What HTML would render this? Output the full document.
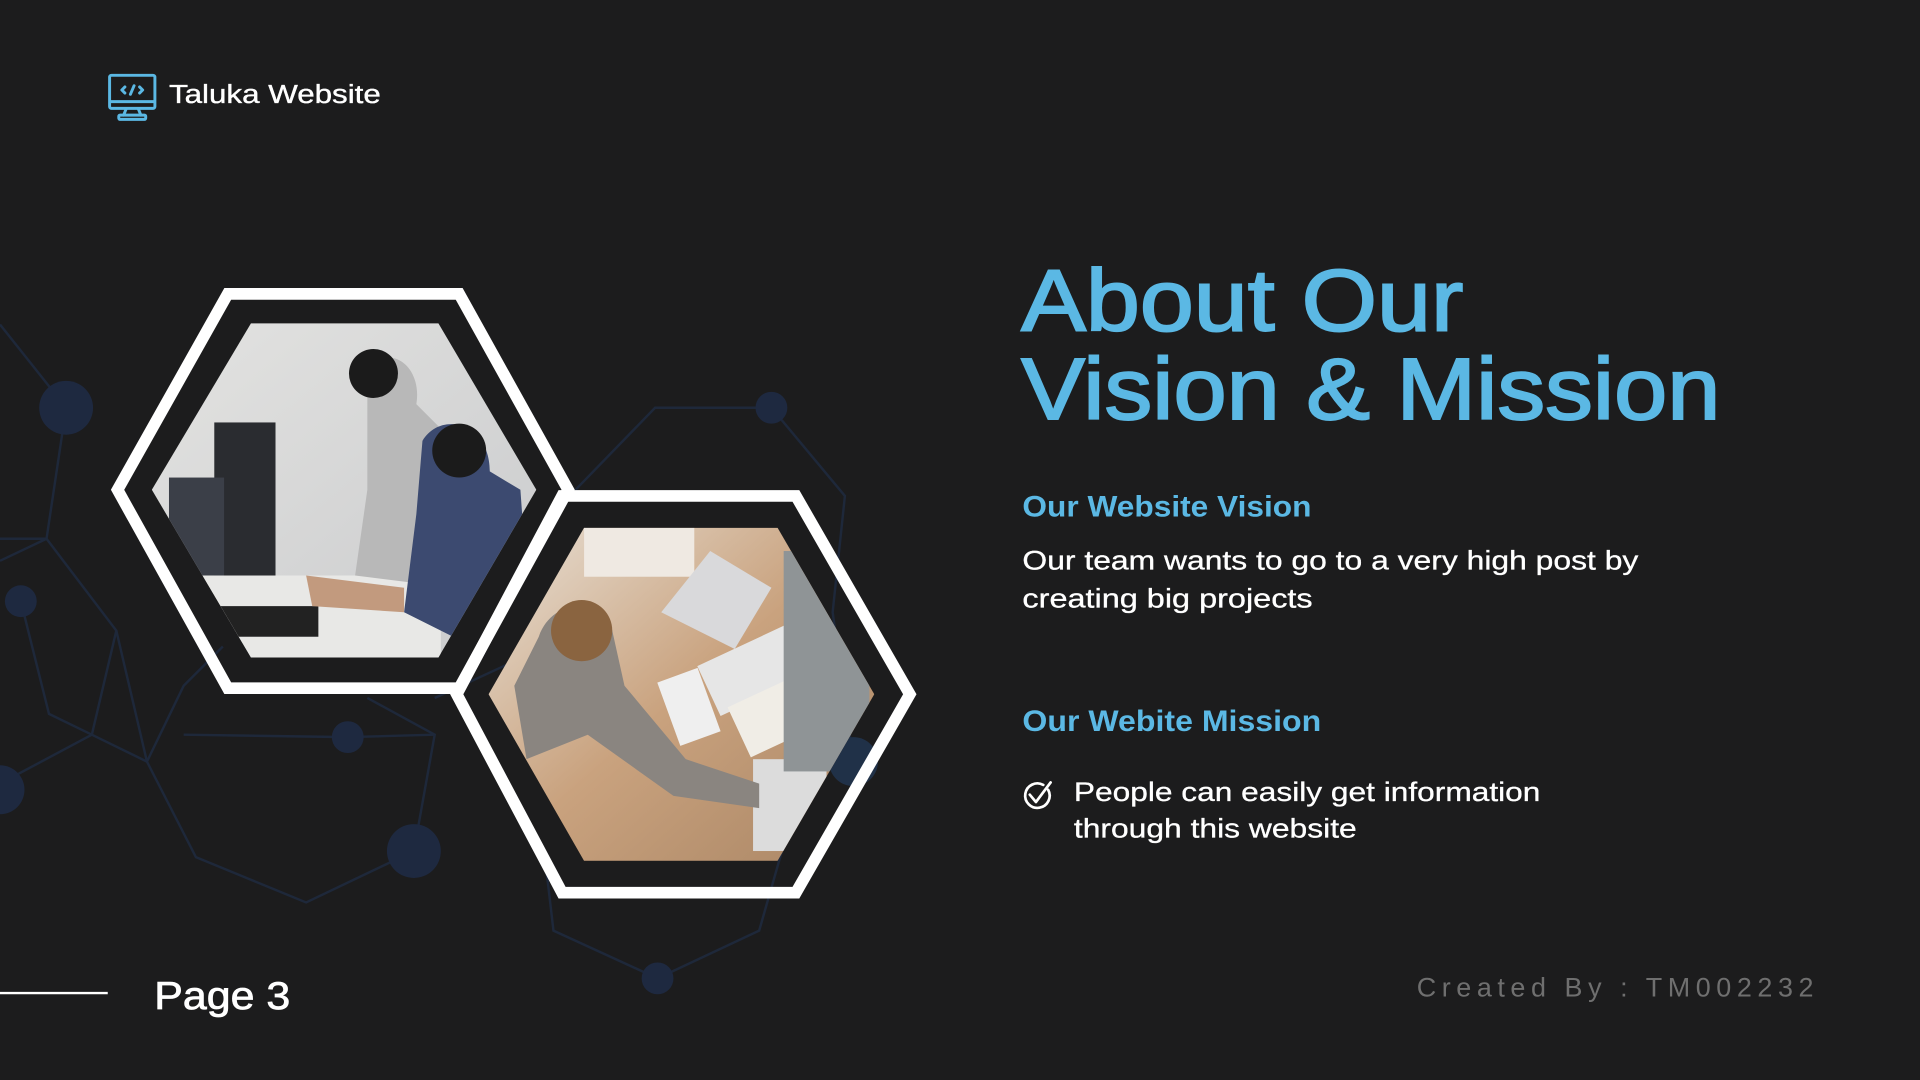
<!DOCTYPE html>
<html><head><meta charset="utf-8"><style>
html,body{margin:0;padding:0;background:#1c1c1d;width:1920px;height:1080px;overflow:hidden}
svg{display:block}
text{font-family:"Liberation Sans",sans-serif}
</style></head><body>
<svg width="1920" height="1080" viewBox="0 0 1568 882" xmlns="http://www.w3.org/2000/svg">
<defs>
<clipPath id="c1"><polygon points="205,264 358,264 438,400 358,537 205,537 124,400"/></clipPath>
<clipPath id="c2"><polygon points="477,431 635,431 714,567 635,703 477,703 399,567"/></clipPath>
<linearGradient id="g1" x1="0" y1="0" x2="1" y2="1"><stop offset="0" stop-color="#e4e4e2"/><stop offset="1" stop-color="#c8c9cb"/></linearGradient>
<linearGradient id="g2" x1="0" y1="0" x2="1" y2="1"><stop offset="0" stop-color="#e9e2d8"/><stop offset="0.5" stop-color="#c9a27e"/><stop offset="1" stop-color="#a88463"/></linearGradient>
</defs>
<rect width="1568" height="882" fill="#1c1c1d"/>
<g stroke="#1e283a" stroke-width="2" fill="none">
<polyline points="0,265 54,333 38,440 0,458"/>
<polyline points="0,440 38,440 95,515 75,600 0,640"/>
<polyline points="17,491 40,583 75,600 120,622 150,560 182,528"/>
<polyline points="95,515 120,622 160,700 250,737 338,695 355,600 300,570"/>
<polyline points="150,600 284,602 355,600"/>
<polyline points="470,400 535,333 630,333 690,405 680,500 697,622"/>
<polyline points="445,700 452,760 537,799 620,760 640,690"/>
<polyline points="355,570 420,540 470,560"/>
</g>
<g fill="#1e2940">
<circle cx="54" cy="333" r="22"/><circle cx="630" cy="333" r="13"/><circle cx="17" cy="491" r="13"/>
<circle cx="284" cy="602" r="13"/><circle cx="338" cy="695" r="22"/><circle cx="537" cy="799" r="13"/>
<circle cx="0" cy="645" r="20"/><circle cx="697" cy="622" r="20" fill="#203148"/>
</g>
<g clip-path="url(#c1)">
<rect x="100" y="260" width="350" height="290" fill="url(#g1)"/>
<rect x="175" y="345" width="50" height="130" fill="#2a2c30"/>
<rect x="138" y="390" width="45" height="80" fill="#3b3f48"/>
<rect x="160" y="470" width="200" height="70" fill="#e8e8e6"/>
<rect x="180" y="495" width="80" height="25" fill="#222"/>
<path d="M300,300 C320,280 345,300 340,330 L370,360 370,480 290,470 300,400 Z" fill="#b8b8b8"/>
<path d="M345,360 C360,335 400,345 400,385 L425,400 430,470 370,520 330,500 340,420 Z" fill="#3c4a70"/>
<circle cx="305" cy="305" r="20" fill="#1b1b1b"/><circle cx="375" cy="368" r="22" fill="#1b1b1b"/>
<path d="M250,470 L330,480 330,500 255,495Z" fill="#c29a7e"/>
</g>
<g clip-path="url(#c2)">
<rect x="395" y="425" width="325" height="285" fill="url(#g2)"/>
<rect x="477" y="431" width="90" height="40" fill="#efe9e2"/>
<path d="M540,500 L580,450 630,480 600,530Z" fill="#d9d9db"/>
<rect x="575" y="525" width="80" height="45" fill="#e6e6e6" transform="rotate(-25 615 547)"/>
<rect x="600" y="560" width="75" height="45" fill="#f0ede6" transform="rotate(-25 637 582)"/>
<rect x="545" y="550" width="35" height="55" fill="#efefef" transform="rotate(-20 562 577)"/>
<rect x="615" y="620" width="60" height="75" fill="#dcdcdc"/>
<path d="M440,520 C450,490 490,485 500,515 L510,560 560,620 620,640 620,660 550,650 480,600 430,620 420,560Z" fill="#8a8580"/>
<circle cx="475" cy="515" r="25" fill="#8a6440"/>
<rect x="640" y="450" width="70" height="180" fill="#8f9496"/>
</g>
<g fill="none" stroke="#fff" stroke-width="9.5" stroke-linejoin="miter">
<polygon points="186,240 375,240 464,400 375,562 186,562 96,400"/>
<polygon points="459,405 650,405 743,567 650,729 459,729 373,567"/>
</g>
<g fill="none" stroke="#5bb8e4" stroke-width="2.4" stroke-linecap="round" stroke-linejoin="round">
<rect x="89.5" y="61.5" width="37" height="27" rx="1.5"/>
<line x1="90" y1="83" x2="126" y2="83"/>
<path d="M103,89 L101,94 M113,89 L115,94"/>
<rect x="97" y="94" width="22" height="3.5" rx="1"/>
<path d="M102,71 L99.5,73.5 L102,76 M114,71 L116.5,73.5 L114,76 M109.5,70 L106.5,77"/>
</g>
<text x="138" y="84" font-size="21" fill="#fff" stroke="#fff" stroke-width="0.3" textLength="173" lengthAdjust="spacingAndGlyphs">Taluka Website</text>
<g fill="#5bb8e4" stroke="#5bb8e4">
<text x="834" y="270" font-size="71" stroke-width="1.6" textLength="361" lengthAdjust="spacingAndGlyphs">About Our</text>
<text x="834" y="342" font-size="71" stroke-width="1.6" textLength="571" lengthAdjust="spacingAndGlyphs">Vision &amp; Mission</text>
<text x="835" y="422" font-size="24" font-weight="bold" stroke-width="0" textLength="236" lengthAdjust="spacingAndGlyphs">Our Website Vision</text>
<text x="835" y="597" font-size="24" font-weight="bold" stroke-width="0" textLength="244" lengthAdjust="spacingAndGlyphs">Our Webite Mission</text>
</g>
<g fill="#fff" stroke="#fff" stroke-width="0.25">
<text x="835" y="465" font-size="22" textLength="503" lengthAdjust="spacingAndGlyphs">Our team wants to go to a very high post by</text>
<text x="835" y="496" font-size="22" textLength="237" lengthAdjust="spacingAndGlyphs">creating big projects</text>
<text x="877" y="654" font-size="22" textLength="381" lengthAdjust="spacingAndGlyphs">People can easily get information</text>
<text x="877" y="684" font-size="22" textLength="231" lengthAdjust="spacingAndGlyphs">through this website</text>
<text x="126" y="824" font-size="32" stroke-width="0.6" textLength="111" lengthAdjust="spacingAndGlyphs">Page 3</text>
</g>
<g fill="none" stroke="#fff" stroke-width="2.2" stroke-linecap="round" stroke-linejoin="round">
<path d="M856,645 A10,10 0 1 1 852,641"/>
<path d="M841,649 L846,655 L858,639"/>
</g>
<line x1="0" y1="811" x2="88" y2="811" stroke="#fff" stroke-width="2"/>
<text x="1157" y="814" font-size="22" fill="#6f6f6f" textLength="324" lengthAdjust="spacing">Created By : TM002232</text>
</svg>
</body></html>
